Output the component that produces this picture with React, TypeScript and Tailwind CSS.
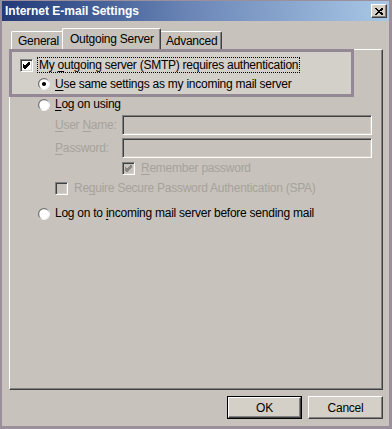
import React from "react";

const FONT = { fontFamily: '"Liberation Sans", Arial, sans-serif' };

function CheckBox({ checked, disabled }: { checked?: boolean; disabled?: boolean }) {
  return (
    <div
      className={`w-[13px] h-[13px] shrink-0 border-t border-l border-t-[#808080] border-l-[#808080] border-b border-r border-b-white border-r-white shadow-[inset_1px_1px_0_#404040,inset_-1px_-1px_0_#d4d0c8] ${
        disabled ? "bg-[#c7c3bc]" : "bg-white"
      } flex items-center justify-center`}
    >
      {checked && (
        <svg width="11" height="11" viewBox="0 0 11 11">
          <path
            d="M2 4.5 L4 6.5 L8.5 2 M2 5.5 L4 7.5 L8.5 3 M2 6.5 L4 8.5 L8.5 4"
            stroke={disabled ? "#8c8881" : "#000"}
            strokeWidth="1"
            fill="none"
            shapeRendering="crispEdges"
          />
        </svg>
      )}
    </div>
  );
}

function Radio({ checked, id }: { checked?: boolean; id: string }) {
  return (
    <svg width="12" height="12" viewBox="0 0 12 12" className="shrink-0">
      <defs>
        <linearGradient id={id} x1="0" y1="0" x2="1" y2="1">
          <stop offset="0.35" stopColor="#6e6e6e" />
          <stop offset="0.65" stopColor="#f4f4f4" />
        </linearGradient>
      </defs>
      <circle cx="6" cy="6" r="5.4" fill="#ffffff" stroke={`url(#${id})`} strokeWidth="1.2" />
      {checked && <circle cx="6" cy="6" r="2.1" fill="#000" />}
    </svg>
  );
}

function U({ children }: { children: React.ReactNode }) {
  return <span className="underline underline-offset-[2px]">{children}</span>;
}

function SunkenInput() {
  return (
    <div className="w-[250px] h-[20px] bg-[#c7c3bc] border-t border-l border-t-[#808080] border-l-[#808080] border-b border-r border-b-white border-r-white shadow-[inset_1px_1px_0_#404040,inset_-1px_-1px_0_#d4d0c8]" />
  );
}

export default function App() {
  return (
    <div
      style={FONT}
      className="w-[392px] h-[429px] bg-[#c7c3bc] border-t border-l-2 border-r-[3px] border-b-[3px] border-[#9c8f9c] flex flex-col text-[12px] tracking-[-0.25px] text-black overflow-hidden"
    >
      {/* title bar */}
      <div className="h-[20px] shrink-0 flex items-center justify-between bg-gradient-to-r from-[#223a78] via-[#6d88b8] to-[#a9c8e6] pl-[3px] pr-[2px]">
        <span className="text-white font-bold text-[12px] leading-none tracking-[0px]">
          Internet E-mail Settings
        </span>
        <div className="w-[16px] h-[14px] bg-[#d4d0c8] border-t border-l border-t-white border-l-white border-b border-r border-b-[#404040] border-r-[#404040] shadow-[inset_-1px_-1px_0_#808080] flex items-center justify-center">
          <svg width="8" height="7" viewBox="0 0 8 7">
            <path d="M0.5 0.5 L7 6.5 M7 0.5 L0.5 6.5 M1.5 0.5 L8 6.5 M8 0.5 L1.5 6.5" stroke="#000" strokeWidth="1" shapeRendering="crispEdges" />
          </svg>
        </div>
      </div>

      {/* tabs */}
      <div className="mt-[7px] ml-[7px] h-[21px] flex items-end relative z-10">
        <div className="ml-[2px] w-[51px] h-[18px] border-t border-l border-t-white border-l-white rounded-tl-[2px] pl-[6px] pt-[2px] leading-[14px]">
          General
        </div>
        <div className="w-[99px] h-[22px] -mb-[1px] bg-[#c7c3bc] border-t border-l border-t-white border-l-white border-r border-r-[#404040] shadow-[inset_-1px_0_0_#808080] rounded-t-[2px] pl-[7px] pt-[3px] leading-[14px]">
          Outgoing Server
        </div>
        <div className="w-[61px] h-[18px] border-t border-r border-t-white border-r-[#404040] shadow-[inset_-1px_0_0_#808080] rounded-tr-[2px] pl-[5px] pt-[2px] leading-[14px]">
          Advanced
        </div>
      </div>

      {/* panel */}
      <div className="ml-[7px] w-[374px] h-[341px] shrink-0 border-t border-l border-t-white border-l-white border-b border-r border-b-[#404040] border-r-[#404040] shadow-[inset_-1px_-1px_0_#808080] flex flex-col">
        {/* highlighted group */}
        <div className="-mt-[1px] -ml-[1px] w-[345px] h-[48px] border-[3px] border-[#948896] bg-[#d3cfc9] flex flex-col pt-[5px] relative z-20">
          <div className="h-[16px] flex items-center pl-[8px]">
            <CheckBox checked />
            <span className="ml-[4px] px-[1px] h-[16px] leading-[15px] border border-dotted border-black">
              My <U>o</U>utgoing server (SMTP) requires authentication
            </span>
          </div>
          <div className="mt-[3px] h-[16px] flex items-center pl-[26px]">
            <Radio checked id="r1" />
            <span className="ml-[5px] leading-[16px]">
              <U>U</U>se same settings as my incoming mail server
            </span>
          </div>
        </div>

        <div className="mt-[1px] h-[13px] flex items-center pl-[28px]">
          <Radio id="r2" />
          <span className="ml-[5px] leading-[13px]">
            <U>L</U>og on using
          </span>
        </div>

        <div className="mt-[4px] h-[20px] flex items-center pl-[45px] text-[#a6a29b]">
          <span className="w-[67px]">
            <U>U</U>ser <U>N</U>ame:
          </span>
          <SunkenInput />
        </div>
        <div className="mt-[3px] h-[20px] flex items-center pl-[45px] text-[#a6a29b]">
          <span className="w-[67px]">
            <U>P</U>assword:
          </span>
          <SunkenInput />
        </div>

        <div className="mt-[4px] h-[13px] flex items-center pl-[112px] text-[#a6a29b]">
          <CheckBox checked disabled />
          <span className="ml-[6px] leading-[13px]">
            <U>R</U>emember password
          </span>
        </div>

        <div className="mt-[7px] h-[13px] flex items-center pl-[45px] text-[#a6a29b]">
          <CheckBox disabled />
          <span className="ml-[6px] leading-[13px]">
            Re<U>q</U>uire Secure Password Authentication (SPA)
          </span>
        </div>

        <div className="mt-[12px] h-[13px] flex items-center pl-[28px]">
          <Radio id="r3" />
          <span className="ml-[5px] leading-[13px]">
            Log on to <U>i</U>ncoming mail server before sending mail
          </span>
        </div>
      </div>

      {/* buttons */}
      <div className="mt-[6px] ml-[7px] w-[374px] flex justify-end gap-[6px]">
        <div className="w-[75px] h-[23px] border border-black flex">
          <div className="flex-1 bg-[#d4d0c8] border-t border-l border-t-white border-l-white border-b border-r border-b-[#404040] border-r-[#404040] shadow-[inset_-1px_-1px_0_#808080] flex items-center justify-center leading-none">
            OK
          </div>
        </div>
        <div className="w-[75px] h-[23px] bg-[#d4d0c8] border-t border-l border-t-white border-l-white border-b border-r border-b-[#404040] border-r-[#404040] shadow-[inset_-1px_-1px_0_#808080] flex items-center justify-center leading-none">
          Cancel
        </div>
      </div>
    </div>
  );
}
